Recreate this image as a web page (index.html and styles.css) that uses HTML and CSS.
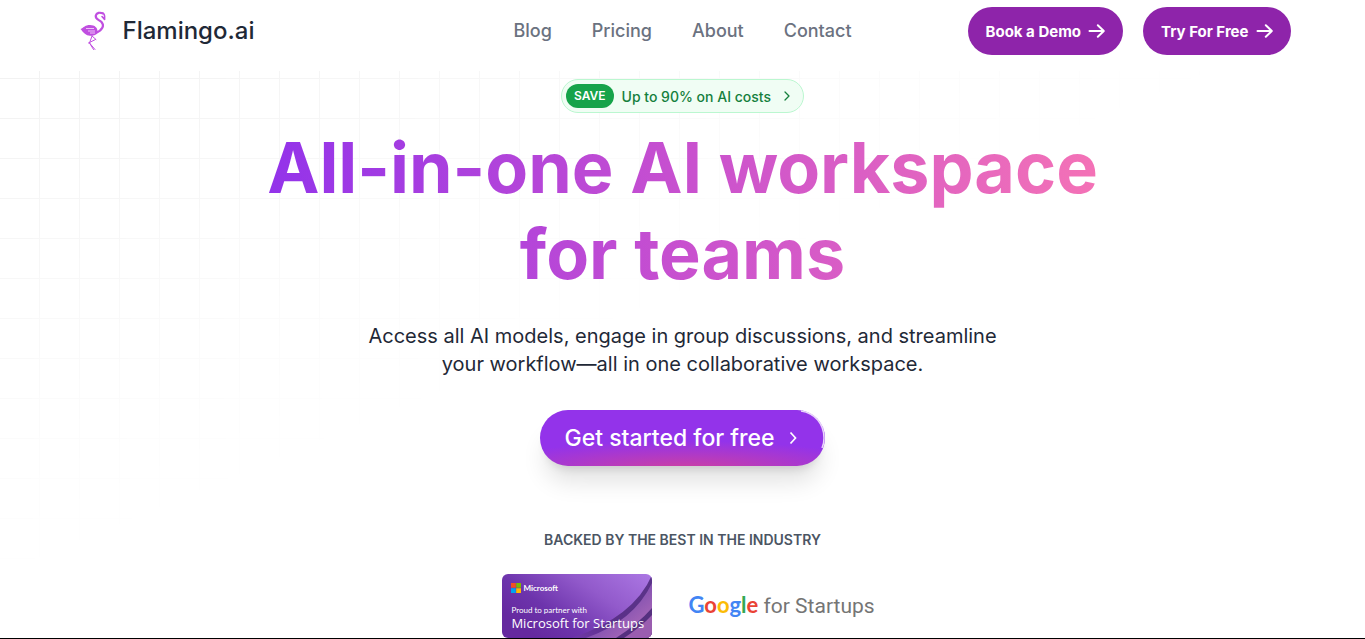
FILE: index.html
```html
<!DOCTYPE html>
<html lang="en">
<head>
<meta charset="utf-8">
<meta name="viewport" content="width=device-width, initial-scale=1">
<title>Flamingo.ai</title>
<link rel="stylesheet" href="styles.css">
</head>
<body>
<header class="site-header">
  <div class="header-inner">
    <a class="brand" href="#">
      <svg class="brand-mark" viewBox="0 0 36 40" aria-hidden="true">
        <g fill="none" stroke="#c04fe0" stroke-linecap="round" stroke-linejoin="round">
          <path d="M28 2.500C25 1 21.500 1.800 20.800 4.500C20 8.500 24 8.500 26.500 11C29.500 14.500 28 18.500 21 22" stroke-width="2.200"/>
          <path d="M26 2.200C29 1.500 30 3.500 29.600 8.500L27 5.500" stroke-width="1.600"/>
          <path d="M17 25l-2.500 7 2.500 3 3 3.500M20.500 28.500L13.500 32M17 25l4 3.500M14.500 32l4 6.500" stroke-width="1"/>
        </g>
        <path d="M5.500 18C9 16.500 10 14 15 14c5 0 7.500 3 7.500 6 0 4-4 5-7.500 4.800-4-.2-6.500-3-9.500-6.800z" fill="#c04fe0"/>
        <path d="M11 17.500h8M13 20h7M15 22h5" stroke="#edc4f8" stroke-width="1"/>
      </svg>
      <span>Flamingo.ai</span>
    </a>
    <nav class="main-nav" aria-label="Main">
      <a href="#">Blog</a><a href="#">Pricing</a><a href="#">About</a><a href="#">Contact</a>
    </nav>
    <div class="header-actions">
      <a class="pill" href="#">Book a Demo
        <svg class="arrow" viewBox="0 0 18 16" aria-hidden="true"><path d="M1.500 8h14M9.800 2.200L15.800 8l-6 5.800"/></svg></a>
      <a class="pill" href="#">Try For Free
        <svg class="arrow" viewBox="0 0 18 16" aria-hidden="true"><path d="M1.500 8h14M9.800 2.200L15.800 8l-6 5.800"/></svg></a>
    </div>
  </div>
</header>
<main class="hero">
  <a class="promo" href="#">
    <span class="promo-tag">SAVE</span>
    <span>Up to 90% on AI costs</span>
    <svg class="chevron" viewBox="0 0 16 16" aria-hidden="true"><path d="M6 4l4 4-4 4"/></svg>
  </a>
  <h1 class="title">All-in-one AI workspace<br>for teams</h1>
  <p class="lead">Access all AI models, engage in group discussions, and streamline your workflow—all in one collaborative workspace.</p>
  <button class="cta" type="button">
    <span>Get started for free</span>
    <svg class="cta-chevron" viewBox="0 0 16 16" aria-hidden="true"><path d="M5.500 2.500L10.500 8l-5 5.500"/></svg>
    <svg class="cta-shine" viewBox="0 0 28 56" aria-hidden="true"><path d="M4 1C18 3 27 14 27 28q0 6-2 10" fill="none" stroke="#e9d5fb" stroke-width="1.500"/></svg>
  </button>
  <h2 class="backed">BACKED BY THE BEST IN THE INDUSTRY</h2>
  <div class="partners">
    <div class="ms-card">
      <svg class="ms-art" viewBox="0 0 150 64" preserveAspectRatio="none" aria-hidden="true">
        <defs>
          <linearGradient id="base" x1="0" y1=".6" x2="1" y2="0"><stop offset="0" stop-color="#65299f"/><stop offset=".25" stop-color="#6d34ac"/><stop offset=".6" stop-color="#925acb"/><stop offset="1" stop-color="#ac78e4"/></linearGradient>
          <linearGradient id="fold" x1="0" y1="1" x2="1" y2="0"><stop offset="0" stop-color="#7038a8"/><stop offset=".4" stop-color="#5a3088"/><stop offset="1" stop-color="#5a3489"/></linearGradient>
          <linearGradient id="rim" x1="0" y1="0" x2="1" y2="1"><stop offset="0" stop-color="#5c3688"/><stop offset=".55" stop-color="#8a56b2"/><stop offset="1" stop-color="#bb72bb"/></linearGradient>
        </defs>
        <path fill="url(#base)" d="M0 0h150v64H0z"/>
        <path fill="url(#fold)" d="M150 1Q132 43 70 64h80z"/>
        <path fill="url(#rim)" d="M150 9Q132 47 84 64h66z"/>
        <path fill="#55307f" d="M150 34Q136 50 114 64h36z"/>
        <path fill="#9a5daf" d="M150 41Q139 53 122 64h28z"/>
      </svg>
      <div class="ms-brand">
        <svg class="ms-logo" viewBox="0 0 10 10" aria-hidden="true"><path fill="#f25022" d="M0 0h4.800v4.800H0z"/><path fill="#7fba00" d="M5.200 0H10v4.800H5.200z"/><path fill="#00a4ef" d="M0 5.200h4.800V10H0z"/><path fill="#ffb900" d="M5.200 5.200H10V10H5.200z"/></svg>
        <span>Microsoft</span>
      </div>
      <div class="ms-small">Proud to partner with</div>
      <div class="ms-large">Microsoft for Startups</div>
    </div>
    <div class="google"><span class="g-word"><span class="blue">G</span><span class="red">o</span><span class="yellow">o</span><span class="blue">g</span><span class="green">l</span><span class="red">e</span></span> <span>for Startups</span></div>
  </div>
</main>
</body>
</html>
```
FILE: styles.css
```css
* { box-sizing: border-box; }

body {
  margin: 0;
  min-height: 100vh;
  display: flex;
  flex-direction: column;
  background: #fff;
  color: #1f2937;
  font-family: Inter, "Liberation Sans", sans-serif;
  border-bottom: 1px solid #000;
}

a { color: inherit; text-decoration: none; }

.site-header { padding: 7px 0 16px; }

.header-inner {
  max-width: 1280px;
  margin: 0 auto;
  padding: 0 32px;
  display: grid;
  grid-template-columns: 1fr auto 1fr;
  align-items: center;
}

.brand {
  display: flex;
  align-items: center;
  gap: 12px;
  font-size: 24px;
  line-height: 32px;
  font-weight: 500;
}
.brand-mark { width: 36px; height: 40px; }

.main-nav {
  display: flex;
  gap: 40px;
  font-size: 18px;
  line-height: 28px;
  font-weight: 500;
  color: #6b7280;
}

.header-actions { display: flex; justify-content: flex-end; gap: 20px; }

.pill {
  display: flex;
  align-items: center;
  gap: 7px;
  height: 48px;
  padding: 0 17px 0 18px;
  border-radius: 24px;
  background: #8e24aa;
  color: #fff;
  font-size: 15px;
  font-weight: 700;
  white-space: nowrap;
}
.arrow { width: 18px; height: 16px; fill: none; stroke: #fff; stroke-width: 2; stroke-linecap: round; stroke-linejoin: round; }

.hero {
  position: relative;
  flex: 1;
  display: flex;
  flex-direction: column;
  align-items: center;
  padding: 8px 24px 0;
}
.hero::before {
  content: "";
  position: absolute;
  z-index: -1;
  inset: 0;
  background:
    repeating-linear-gradient(90deg, transparent 0 39px, #f2f2f2 39px 40px),
    repeating-linear-gradient(180deg, transparent 0 7px, #f2f2f2 7px 8px, transparent 8px 40px);
  -webkit-mask-image: linear-gradient(to bottom right, #000, transparent 46%);
  mask-image: linear-gradient(to bottom right, #000, transparent 46%);
}

.promo {
  display: flex;
  align-items: center;
  gap: 8px;
  height: 34px;
  padding: 0 8px 0 4px;
  border: 1px solid #bbf7d0;
  border-radius: 17px;
  background: #f0fdf4;
  color: #15803d;
  font-size: 14px;
  font-weight: 500;
}
.promo-tag {
  padding: 0 8px;
  border-radius: 12px;
  background: #16a34a;
  color: #fff;
  font-size: 12px;
  line-height: 24px;
  font-weight: 600;
}
.chevron { width: 16px; height: 16px; fill: none; stroke: #15803d; stroke-width: 1.300; stroke-linecap: round; stroke-linejoin: round; }

.title {
  margin: 12px 0 0;
  font-size: 70px;
  line-height: 86px;
  font-weight: 700;
  text-align: center;
  color: transparent;
  background: linear-gradient(to right, #9333ea, #c850cf 50%, #f472b6);
  -webkit-background-clip: text;
  background-clip: text;
}

.lead {
  max-width: 672px;
  margin: 25px 0 0;
  font-size: 20px;
  line-height: 28px;
  text-align: center;
}

.cta {
  position: relative;
  display: flex;
  align-items: center;
  gap: 10px;
  height: 56px;
  margin: 32px 0 0;
  padding: 0 24px;
  border: 0;
  border-radius: 28px;
  background: radial-gradient(ellipse 70% 50% at 50% 105%, #cd40a2, #9333ea) #9333ea;
  box-shadow: 0 20px 25px -5px rgb(0 0 0 / 12%), 0 8px 10px -6px rgb(0 0 0 / 12%);
  color: #fff;
  font: 500 23px/32px Inter, "Liberation Sans", sans-serif;
}
.cta-chevron { width: 16px; height: 16px; fill: none; stroke: #fff; stroke-width: 1.700; }
.cta-shine { position: absolute; top: 0; right: 0; width: 28px; height: 56px; }

.backed {
  margin: 64px 0 0;
  font-size: 14px;
  line-height: 20px;
  font-weight: 600;
  color: #4b5563;
}

.partners {
  display: flex;
  align-items: center;
  gap: 36px;
  margin-top: 24px;
  padding-left: 12px;
}

.ms-card {
  position: relative;
  isolation: isolate;
  width: 150px;
  height: 64px;
  padding: 9px 9px 0;
  border-radius: 6px;
  overflow: hidden;
  color: #fff;
  font-family: "Open Sans", "Noto Sans", sans-serif;
  white-space: nowrap;
}
.ms-art { position: absolute; z-index: -1; inset: 0; width: 100%; height: 100%; }
.ms-brand { display: flex; align-items: center; gap: 2px; font: 700 8px/10px Lato, sans-serif; }
.ms-logo { width: 10px; height: 10px; }
.ms-small { margin-top: 12px; font: 400 8px/10px Lato, sans-serif; }
.ms-large { font-size: 13px; line-height: 16px; font-weight: 500; }

.google {
  font-family: Roboto, sans-serif;
  font-size: 21px;
  line-height: 26px;
  padding-bottom: 2px;
  color: #757575;
  white-space: nowrap;
}
.g-word { font-family: Lato, sans-serif; font-size: 22px; font-weight: 700; }
.blue { color: #4285f4; }
.red { color: #ea4335; }
.yellow { color: #fbbc05; }
.green { color: #34a853; }
```
